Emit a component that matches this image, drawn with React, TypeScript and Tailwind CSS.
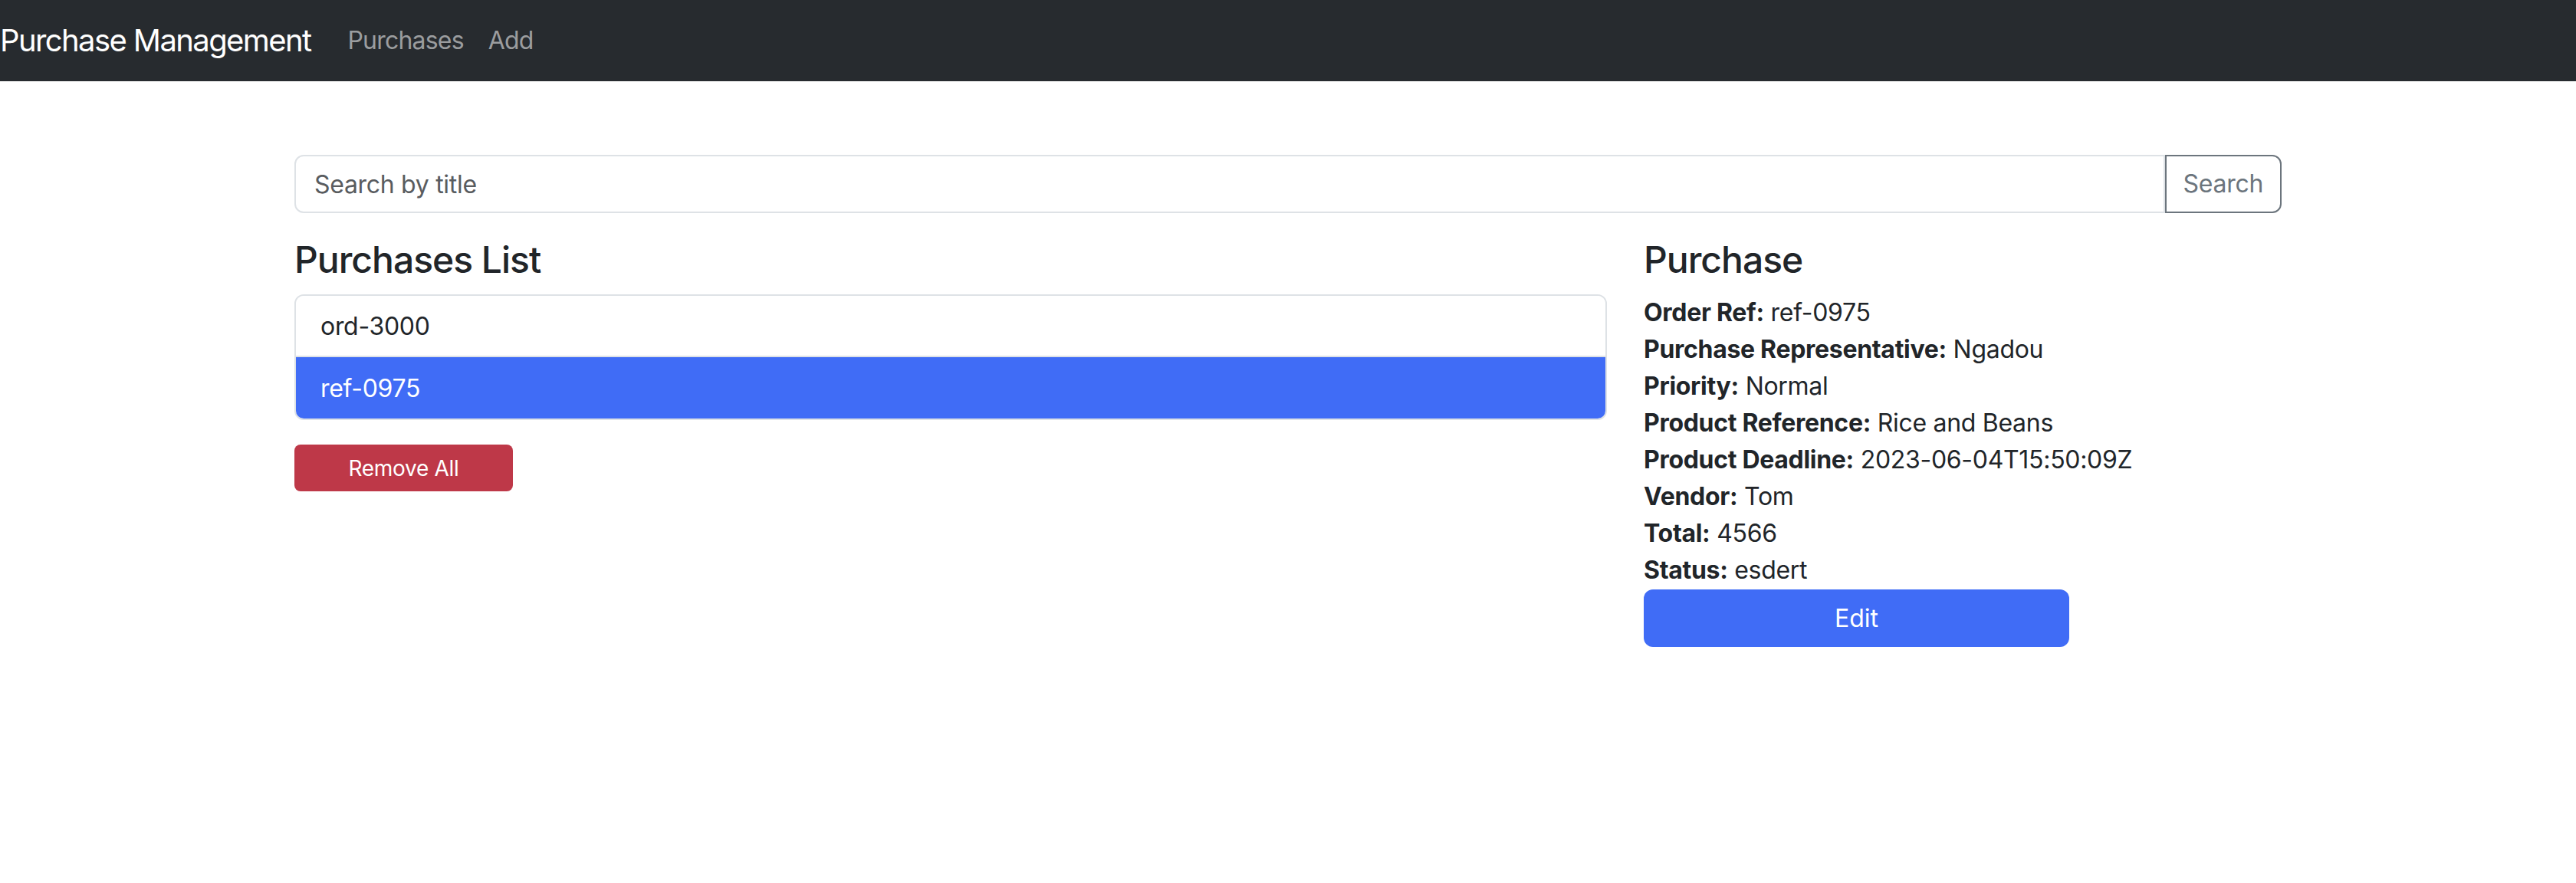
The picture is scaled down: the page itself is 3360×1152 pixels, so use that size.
import React from 'react';

interface Purchase {
  orderRef: string;
  representative: string;
  priority: string;
  productReference: string;
  deadline: string;
  vendor: string;
  total: number;
  status: string;
}

const purchases: Purchase[] = [
  {
    orderRef: 'ord-3000',
    representative: 'Ngadou',
    priority: 'Normal',
    productReference: 'Rice and Beans',
    deadline: '2023-06-04T15:50:09Z',
    vendor: 'Tom',
    total: 4566,
    status: 'esdert',
  },
  {
    orderRef: 'ref-0975',
    representative: 'Ngadou',
    priority: 'Normal',
    productReference: 'Rice and Beans',
    deadline: '2023-06-04T15:50:09Z',
    vendor: 'Tom',
    total: 4566,
    status: 'esdert',
  },
];

const App: React.FC = () => {
  const current = 1;
  const p = purchases[current];

  // label / value pairs shown in the detail panel
  const fields: [string, string][] = [
    ['Order Ref:', p.orderRef],
    ['Purchase Representative:', p.representative],
    ['Priority:', p.priority],
    ['Product Reference:', p.productReference],
    ['Product Deadline:', p.deadline],
    ['Vendor:', p.vendor],
    ['Total:', String(p.total)],
    ['Status:', p.status],
  ];

  return (
    <div className="min-h-[1152px] w-full bg-white text-[#212529] font-['Inter','Liberation_Sans',sans-serif]">
      <nav className="flex h-[106px] items-center bg-[#272b2f]">
        <a href="#" className="mr-[32px] text-[40px] leading-[60px] tracking-[-1.6px] text-white">
          Purchase Management
        </a>
        <div className="flex">
          <a href="#" className="px-[16px] text-[32px] leading-[48px] tracking-[-0.8px] text-[#9b9d9f]">
            Purchases
          </a>
          <a href="#" className="px-[16px] text-[32px] leading-[48px] tracking-[-0.8px] text-[#9b9d9f]">
            Add
          </a>
        </div>
      </nav>

      <div className="mx-auto w-[2592px] pt-[96px]">
        <div className="mb-[32px] flex h-[76px]">
          <input
            type="text"
            placeholder="Search by title"
            className="h-full flex-1 rounded-l-[12px] border-2 border-[#dee2e6] px-[24px] text-[32px] tracking-[-0.3px] outline-none placeholder:text-[#595c5f]"
          />
          <button className="h-full rounded-r-[12px] border-2 border-[#6c757d] px-[22px] text-[32px] tracking-[-0.3px] text-[#6c757d]">
            Search
          </button>
        </div>

        <div className="flex gap-[48px]">
          <div className="w-[1712px]">
            <h4 className="mb-[16px] text-[48px] font-medium leading-[58px] tracking-[-1px]">Purchases List</h4>
            <ul className="overflow-hidden rounded-[12px] border-2 border-[#dee2e6]">
              {purchases.map((item, index) => (
                <li
                  key={index}
                  className={
                    index === current
                      ? 'h-[80px] bg-[#406cf6] px-[32px] text-[32px] leading-[82px] tracking-[-0.3px] text-white'
                      : 'h-[80px] border-b-2 border-[#dee2e6] bg-white px-[32px] text-[32px] leading-[80px] tracking-[-0.3px]'
                  }
                >
                  {item.orderRef}
                </li>
              ))}
            </ul>
            <button className="mt-[32px] h-[61px] w-[285px] rounded-[8px] bg-[#be3848] text-[28px] tracking-[-0.3px] text-white">
              Remove All
            </button>
          </div>

          <div className="w-[832px]">
            <h4 className="mb-[16px] text-[48px] font-medium leading-[58px] tracking-[-1px]">Purchase</h4>
            {fields.map(([label, value]) => (
              <div key={label} className="text-[32px] leading-[48px] tracking-[-0.3px]">
                <span className="font-bold">{label}</span> {value}
              </div>
            ))}
            <button className="mt-[1px] h-[75px] w-[555px] rounded-[12px] bg-[#406cf6] text-[32px] text-white">
              Edit
            </button>
          </div>
        </div>
      </div>
    </div>
  );
};

export default App;
